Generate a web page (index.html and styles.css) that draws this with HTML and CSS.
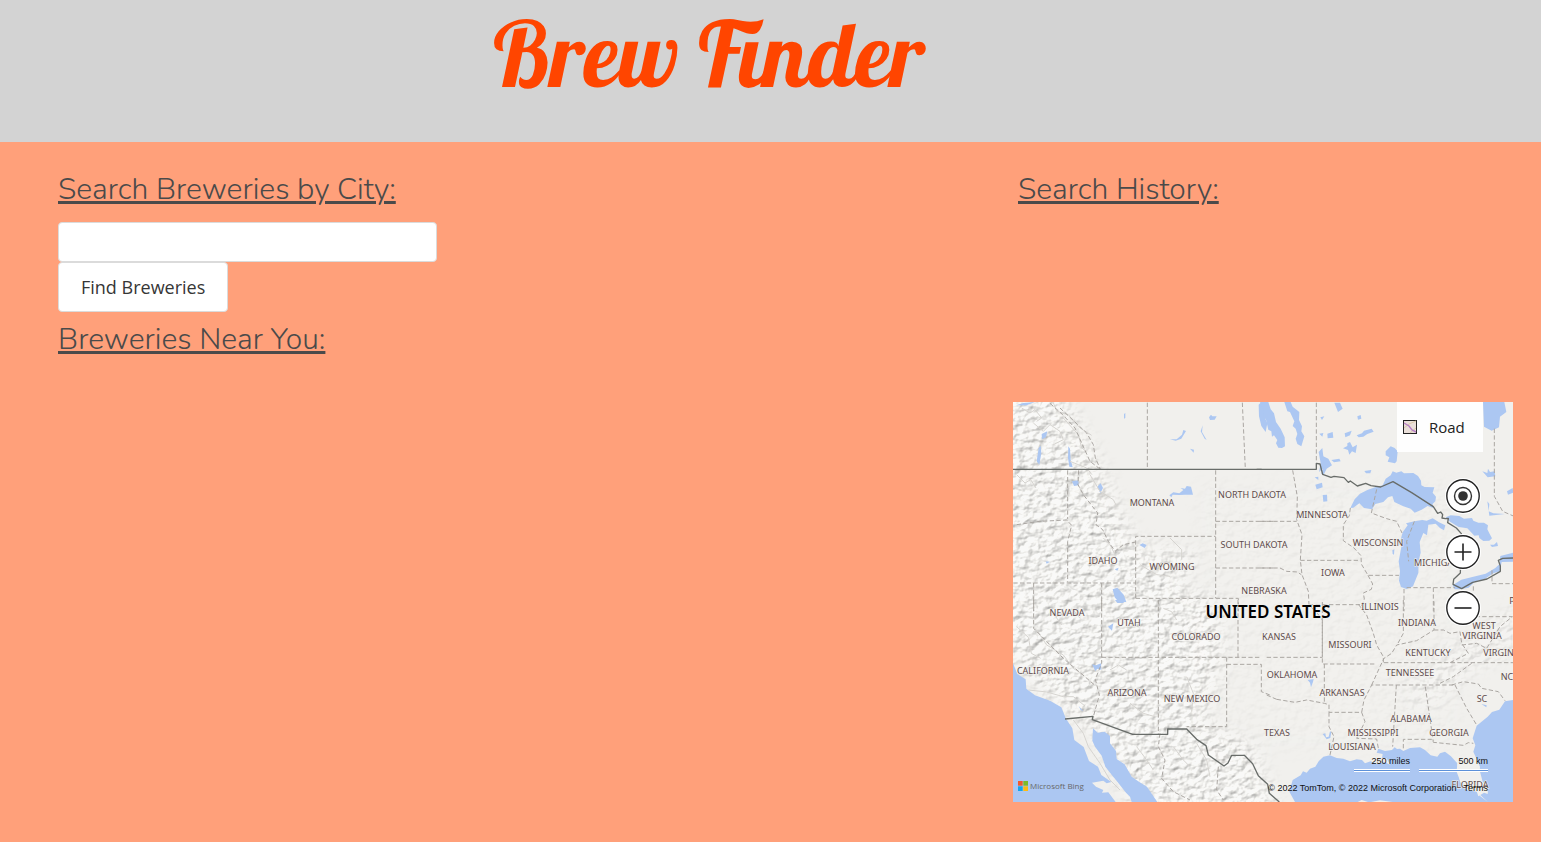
FILE: index.html
```html
<!DOCTYPE html>
<html lang="en">
<head>
<meta charset="utf-8">
<title>Brew Finder</title>
<link rel="stylesheet" href="styles.css">
</head>
<body>
<header class="hero"><h1 class="title">Brew Finder</h1></header>
<main class="layout">
  <section class="finder">
    <form class="search">
      <label class="heading" for="city">Search Breweries by City:</label>
      <input class="field" id="city" type="text">
      <button class="submit" type="button">Find Breweries</button>
    </form>
    <h2 class="heading">Breweries Near You:</h2>
  </section>
  <aside class="side">
    <h2 class="heading history">Search History:</h2>
    <div class="map">
      <svg class="canvas" viewBox="0 0 500 400" role="img" aria-label="Map of the United States">
        <defs>
          <filter id="relief" x="0" y="0" width="100%" height="100%" color-interpolation-filters="sRGB">
            <feTurbulence type="fractalNoise" baseFrequency="0.11 0.15" numOctaves="3" seed="8"/>
            <feDiffuseLighting lighting-color="#f4f3f0" surfaceScale="1.7" diffuseConstant="1.25"><feDistantLight azimuth="225" elevation="53"/></feDiffuseLighting>
          </filter>
          <filter id="soft"><feGaussianBlur stdDeviation="9"/></filter>
          <mask id="ranges"><g filter="url(#soft)" fill="#fff">
            <path opacity=".6" d="M-20-20H45L85 60 105 105 125 145 185 150 165 185 205 200 210 255 190 320 240 345 270 420H130L80 330 45 305 0 260-20 240Z"/>
            <path opacity=".25" d="M390 290 430 250 490 210 520 200V240L450 275 410 310Z"/>
            <path opacity=".07" d="M180 80H450V350H200Z"/>
          </g></mask>
        </defs>
        <rect class="land" width="500" height="400"/>
        <rect width="500" height="400" filter="url(#relief)" mask="url(#ranges)"/>

        <g transform="translate(-3 -4) scale(.33333)">
          <path class="water" d="M18 22 40 15 75 12 50 22ZM86 150 92 143 94 165 88 200 80 190ZM95 108 112 100 108 118 96 124ZM175 145 180 152 182 185 188 208 178 206 174 180ZM186 250 205 247 206 262 192 264ZM262 266 272 256 279 270 271 286ZM478 292 490 283 508 286 520 276 512 270 525 272 530 264 543 266 549 290 525 290 508 291 488 290 484 298ZM597 58 603 50 607 55 620 55 614 65 600 66ZM480 124 500 124 516 110 520 96 528 99 514 122 497 128ZM578 82 572 100 584 122 590 126 576 102ZM540 152 552 155 551 164ZM342 48 346 45 346 60 342 62ZM388 441 398 436 410 441 404 450ZM308 574 322 569 341 590 349 612 326 612 314 598ZM107 490 120 491 110 497ZM314 514 326 509 322 518ZM746 20 754 12 764 35 766 62 772 76 767 102 754 84 747 55Z"/>
          <path class="ridge" d="M70 75 100 100 120 80 150 100 160 125 130 140M35 30 60 45 75 35 95 60 80 70M130 14 140 40 175 50 210 90 245 112M160 60 205 110 215 150 230 160M240 230 270 280 310 305 320 325M480 420 515 455 515 485M390 500 440 530 480 535M20 230 45 255 62 245 78 270M180 190 230 210 246 230M280 420 300 440 315 470"/>
          <path class="state" d="M412 14V213M697 14 706 213M173 217V363M173 430V553M206 217 204 260 220 290 247 325 263 345 258 380 278 395 295 430 315 460 340 440 377 432M20 380 90 370 170 366 185 382 173 430M617 217V600M377 600V415H617M617 370H790M617 510H790M10 555H377M71 555V640M275 555V640M377 601H685V640M120 16 158 50 195 90 215 135 240 190 275 217M150 30 230 105 250 140 256 180 272 215"/>
          <path class="border" d="M9 214H755"/>
        </g>
        <g transform="translate(247 -4) scale(.33333)">
          <path class="water" d="M0 12H25L32 34 42 46 48 72 62 92 74 118 75 145 66 150 55 149 48 136 52 126 42 112 36 116 34 100 25 95 18 65 10 55 12 38ZM73 12H92L98 26 118 42 117 66 126 85 124 100 133 115 124 145 112 138 107 122 112 108 107 92 98 84 103 70 90 42 82 40ZM176 162 187 150 190 175 205 182 216 202 200 212 191 230 184 228 188 212 177 222 182 196ZM214 186 238 182 242 190 222 193ZM249 151 262 144 262 136 270 132 278 148 291 140 287 165 276 160 268 170 264 156ZM254 106 275 98 270 112 256 118ZM290 112 306 106 312 98 335 92 341 101 322 108 310 116 296 118ZM202 107 218 102 220 119 203 121ZM178 107 190 105 187 116ZM181 58 193 55 186 66ZM223 14 240 14 248 32 234 42ZM292 55 302 51 304 62 294 65ZM377 160 392 145 404 150 413 160 410 190 405 196 383 191 388 178 377 172ZM313 219 334 216 331 226 318 226ZM166 260 186 254 188 268 170 274ZM188 291 201 290 202 310 190 311ZM164 238 175 236 175 246ZM669 12H733L739 42 720 56 717 88 695 98 672 86ZM667 220 682 225 684 212 690 222 704 220 706 235 683 238ZM682 310 688 318 686 340 700 346 735 348 688 353ZM741 280 758 270 760 284 744 290Z"/>
          <path class="water" d="M271 330 284 304 300 287 322 276 345 268 368 262 377 242 392 232 398 220 409 224 424 220 432 226 460 225 474 234 483 248 484 262 494 267 523 268 518 284 528 296 526 310 518 318 520 330 503 324 485 335 464 344 452 332 430 325 403 312 397 294 384 298 370 312 346 318 336 334 312 330 298 316 280 329ZM417 548 420 520 416 490 425 442 418 440 428 403 443 382 438 376 463 370 487 366 500 368 518 361 537 373 556 382 552 397 540 390 527 377 505 380 501 412 490 405 479 432 482 464 476 488 475 525 459 565 440 573 423 567ZM557 358 572 352 598 354 612 362 636 360 640 368 655 374 672 374 684 382 682 394 688 406 696 421 688 428 670 429 658 420 656 412 643 413 622 391 596 387 570 371ZM578 562 604 545 640 536 677 527 706 510 719 498 721 474 760 464V491L725 492 719 520 700 526 673 544 646 550 626 569 600 574 584 574ZM690 440 702 440 711 432 714 444 696 447ZM397 457 403 454 402 470 398 468Z"/>
          <path class="state" d="M169 14V190M98 217 112 296 110 365 126 410 121 486 126 530 145 580 147 620 165 640M0 370H110M0 510H60L80 520 112 522 124 530M121 487H300M271 330 268 353 250 380 250 428 282 450 303 473 304 498 324 532 417 532M324 532 338 558 334 574 310 585 313 603 304 626M350 274 334 345 380 362 410 370 426 405M432 573V640M440 569H585M520 569V640M696 517V557H760M703 92V295L728 340 760 354M463 370 440 430 446 490M640 565V580M147 620H304"/>
          <path class="border" d="M-10 214H169V196L180 198 188 229 213 238 222 235 252 239 265 253 271 249 292 264 317 256 333 263 362 267 399 251 455 284 520 326 533 346 542 342 548 350 546 360 556 362 565 361 563 374 589 390 604 407 601 525 581 544 579 559 605 572 638 553 681 543 721 520V504L715 487 728 481 760 480"/>
        </g>
        <g transform="translate(-3 198) scale(.33333)">
          <path class="water" d="M9 190 22 222 47 238 49 266 75 286 120 302 154 322 168 356 187 385 193 420 221 441 237 483 264 500 274 525 304 546 290 550 280 542 246 548 258 560 280 570 276 578 295 577 317 606H9ZM249 385 263 398 284 395 300 408 300 430 318 453 320 477 344 493 365 530 388 546 411 560 442 606H365L360 590 348 578 322 545 306 526 286 500 275 467 255 440 247 422ZM246 193 258 196 273 190 274 209 262 206 256 213ZM294 80 310 70 306 92ZM315 0H345L340 9H322ZM206 318 220 333 212 330Z"/>
          <path class="ridge" d="M20 80 55 112 64 160 92 175M55 270 110 276 160 290 190 290 225 318M80 90 110 135 160 165 190 205 220 225M300 210 325 195 350 210M360 310 400 340 435 350M460 25 485 35 500 60M530 230 550 280 545 335M190 360 220 400 235 440 270 490 300 540 330 570M380 440 410 480 430 510M560 430 590 480 600 530M490 440 520 480 540 500M130 40 155 75M190 30 210 55M350 50 370 80"/>
          <path class="state" d="M71 0V85L160 175 255 256M275 0V190L256 238 268 285 250 350M445 0V404M275 172H750M684 0V172M650 172V380H530M650 193H754V275L780 285M450 400 445 440 465 480 455 535 490 575 540 600M625 500 620 570 640 600"/>
          <path class="border" d="M165 357 249 349 247 359 368 403H473V387H530L560 418 588 437 595 465 642 498 654 489 665 466H703L728 491 745 527 773 553 778 580 808 606"/>
        </g>
        <g transform="translate(247 198) scale(.33333)">
          <path class="water" d="M760 300V606H684L660 588 650 575 620 570 603 550 590 515 592 490 572 468 555 455 540 460 532 470 512 466 495 450 480 442 450 444 430 453 420 446 411 447 404 442 396 450 375 453 355 446 350 458 368 462 366 474 380 475 390 494 374 486 350 492 332 484 315 490 306 480 290 478 270 484 250 476 230 474 210 466 190 470 176 484 166 500 150 506 140 518 129 514 122 526 98 540 88 575 105 606H684L655 580 660 500 640 455 646 436 638 415 650 377 683 350 696 336 718 329 735 304Z"/>
          <path class="land" d="M592 490 625 470 653 482 660 515 668 545 685 560 683 582 672 578 655 589 650 573 625 568 600 545Z"/>
          <path class="water" d="M143 240 161 237 159 246 153 262 150 248ZM188 402 196 400 198 412 206 410 210 394 214 396 211 414 200 418ZM664 312 680 316 679 322Z"/>
          <path class="land" d="M293 606 305 600 324 606ZM333 606 360 601 398 606Z"/>
          <path class="state" d="M20 172H187V0M172 40 187 60V192H350M50 298 105 307 140 300 193 310 207 314V337H305M193 192V310M20 285 50 298M207 337V380L222 410 210 465M305 337 315 365 290 415 350 417 355 445M305 337 312 300 335 255H585M335 255 360 200 372 175 395 160 410 135 470 122 522 90V0M295 13 320 45 340 100 350 135 370 170 370 192M409 255 398 440M496 260 520 425M430 445V418H515L520 427 610 436 625 428 640 430M585 255 620 325 650 375M575 255 610 245 655 252 665 265 715 275 735 302M372 188H760M635 190 580 230 540 250M522 90 550 90 570 100 600 95 605 130 625 160 570 188M605 135 650 130 680 145 720 80 757 50H640M430 0V100L411 135M650 0V60"/>
        </g>

        <g class="labels">
          <text x="139" y="104">MONTANA</text><text x="239" y="96">NORTH DAKOTA</text><text x="309" y="116">MINNESOTA</text>
          <text x="241" y="146">SOUTH DAKOTA</text><text x="365" y="144">WISCONSIN</text><text x="90" y="162">IDAHO</text>
          <text x="159" y="168">WYOMING</text><text x="320" y="174">IOWA</text><text x="424" y="164">MICHIGAN</text>
          <text x="251" y="192">NEBRASKA</text><text x="54" y="214">NEVADA</text><text x="116" y="224">UTAH</text>
          <text x="183" y="238">COLORADO</text><text x="266" y="238">KANSAS</text><text x="367" y="208">ILLINOIS</text>
          <text x="404" y="224">INDIANA</text><text x="471" y="227">WEST</text><text x="469" y="237">VIRGINIA</text>
          <text x="337" y="246">MISSOURI</text><text x="415" y="254">KENTUCKY</text><text x="490" y="254">VIRGINIA</text>
          <text x="30" y="272">CALIFORNIA</text><text x="114" y="294">ARIZONA</text><text x="179" y="300">NEW MEXICO</text>
          <text x="279" y="276">OKLAHOMA</text><text x="397" y="274">TENNESSEE</text><text x="494" y="278">NC</text>
          <text x="329" y="294">ARKANSAS</text><text x="469" y="300">SC</text><text x="398" y="320">ALABAMA</text>
          <text x="264" y="334">TEXAS</text><text x="360" y="334">MISSISSIPPI</text><text x="436" y="334">GEORGIA</text>
          <text x="339" y="348">LOUISIANA</text><text x="457" y="386">FLORIDA</text><text x="499" y="202">P</text>
          <text class="country" x="255" y="216">UNITED STATES</text>
        </g>
      </svg>
      <button class="mode" type="button">
        <svg class="mode-icon" viewBox="0 0 14 14"><rect x=".5" y=".5" width="13" height="13" fill="#eadfd9" stroke="#222"/><path d="M1 8 6 4 13 1M7 13 13 8" fill="none" stroke="#d9c8a8"/><path d="M1 3 6 6 9 10 13 12" fill="none" stroke="#b67fc4" stroke-width="1.4"/></svg>
        <span>Road</span>
      </button>
      <div class="controls">
        <button class="round" type="button" aria-label="Locate me"><svg viewBox="0 0 34 34"><circle class="rim" cx="17" cy="17" r="16.2"/><circle cx="17" cy="17" r="8.5" fill="none" stroke="#333" stroke-width="1.4"/><circle cx="17" cy="17" r="4.8" fill="#333"/></svg></button>
        <button class="round" type="button" aria-label="Zoom in"><svg viewBox="0 0 34 34"><circle class="rim" cx="17" cy="17" r="16.2"/><path d="M8.500 17H25.500M17 8.500V25.500" stroke="#222" stroke-width="1.6"/></svg></button>
        <button class="round" type="button" aria-label="Zoom out"><svg viewBox="0 0 34 34"><circle class="rim" cx="17" cy="17" r="16.2"/><path d="M8.500 17H25.500" stroke="#222" stroke-width="1.6"/></svg></button>
      </div>
      <div class="bing">
        <svg class="bing-icon" viewBox="0 0 10 10"><path fill="#f05a30" d="M0 0h4.700v4.700H0z"/><path fill="#7dba28" d="M5.300 0H10v4.700H5.300z"/><path fill="#16a5ed" d="M0 5.300h4.700V10H0z"/><path fill="#fdbb13" d="M5.300 5.300H10V10H5.300z"/></svg>
        <span>Microsoft Bing</span>
      </div>
      <div class="scales"><span class="scale miles">250 miles</span><span class="scale km">500 km</span></div>
      <div class="credit"><span>© 2022 TomTom, © 2022 Microsoft Corporation</span><a href="#terms">Terms</a></div>
    </div>
  </aside>
</main>
</body>
</html>
```
FILE: styles.css
```css
* { box-sizing: border-box; }
body {
  margin: 0;
  min-height: 100vh;
  background: #ffa07a;
  color: #4a4a4a;
  font-family: "Open Sans", "Noto Sans", sans-serif;
}
.hero {
  height: 142px;
  padding-right: 8%;
  background: #d3d3d3;
  text-align: center;
}
.title {
  margin: 0;
  padding-top: 4px;
  color: #ff4500;
  font: 400 90px/100px Lobster, cursive;
}
.layout {
  display: grid;
  grid-template-columns: 1fr 500px;
  padding: 28px 28px 40px 58px;
}
.heading {
  display: block;
  margin: 0;
  font: 300 30px/40px Nunito, sans-serif;
  text-decoration: underline;
  text-decoration-thickness: 3px;
  text-underline-offset: 2px;
}
.search {
  display: flex;
  flex-direction: column;
  align-items: flex-start;
  margin-bottom: 8px;
}
.field {
  width: 100%;
  max-width: 379px;
  height: 40px;
  margin-top: 12px;
  padding: 8px 12px;
  border: 1px solid #dbdbdb;
  border-radius: 4px;
  background: #fff;
  font: inherit;
}
.submit {
  height: 50px;
  padding: 0 22px;
  border: 1px solid #dbdbdb;
  border-radius: 4px;
  background: #fff;
  color: #363636;
  font: 18px/24px "Open Sans", sans-serif;
}
.history { padding-left: 5px; }
.map {
  position: relative;
  margin-top: 192px;
  overflow: hidden;
}
.canvas { display: block; width: 100%; }
.land { fill: #f1f0ed; }
.water { fill: #acc7f2; }
.state { fill: none; stroke: #aaa6a2; stroke-width: 3; stroke-dasharray: 13 7; }
.ridge { fill: none; stroke: #d6d4d0; stroke-width: 3; }
.border { fill: none; stroke: #686c69; stroke-width: 4; stroke-linejoin: round; }
.labels {
  fill: #5d4a4a;
  stroke: #f4f3f0;
  stroke-width: 1px;
  paint-order: stroke;
  font: 9px "Noto Sans", sans-serif;
  text-anchor: middle;
}
.country { fill: #000; font-size: 17px; font-weight: 600; }
.mode {
  position: absolute;
  top: 0;
  right: 30px;
  display: flex;
  align-items: center;
  gap: 12px;
  width: 86px;
  height: 50px;
  padding: 0 6px;
  border: 0;
  background: rgba(255, 255, 255, .92);
  color: #222;
  font: 15px "Open Sans", sans-serif;
}
.mode-icon { width: 14px; height: 14px; }
.controls {
  position: absolute;
  top: 77px;
  right: 33px;
  display: grid;
  gap: 22px;
}
.round {
  width: 34px;
  height: 34px;
  padding: 0;
  border: 0;
  border-radius: 50%;
  background: #fff;
  box-shadow: 0 0 0 1px #fff;
}
.round svg { display: block; }
.rim { fill: none; stroke: #222; stroke-width: 1.4; }
.bing {
  position: absolute;
  left: 5px;
  bottom: 10px;
  display: flex;
  align-items: center;
  gap: 2px;
  color: #686868;
  font: 8px/12px "Open Sans", sans-serif;
}
.bing-icon { width: 10px; height: 10px; }
.scales {
  position: absolute;
  right: 25px;
  bottom: 32px;
  display: flex;
  gap: 9px;
  color: #111;
  font: 9px/12px "Liberation Sans", sans-serif;
  text-align: right;
}
.scale { padding-bottom: 2px; border-bottom: 1px solid #fff; box-shadow: 0 1px #5d91d9, 0 2px #fff; }
.miles { width: 56px; }
.km { width: 69px; }
.credit {
  position: absolute;
  right: 25px;
  bottom: 8px;
  display: flex;
  gap: 7px;
  color: #111;
  font: 9px/12px "Liberation Sans", sans-serif;
}
.credit a { color: inherit; text-decoration: none; }
```
